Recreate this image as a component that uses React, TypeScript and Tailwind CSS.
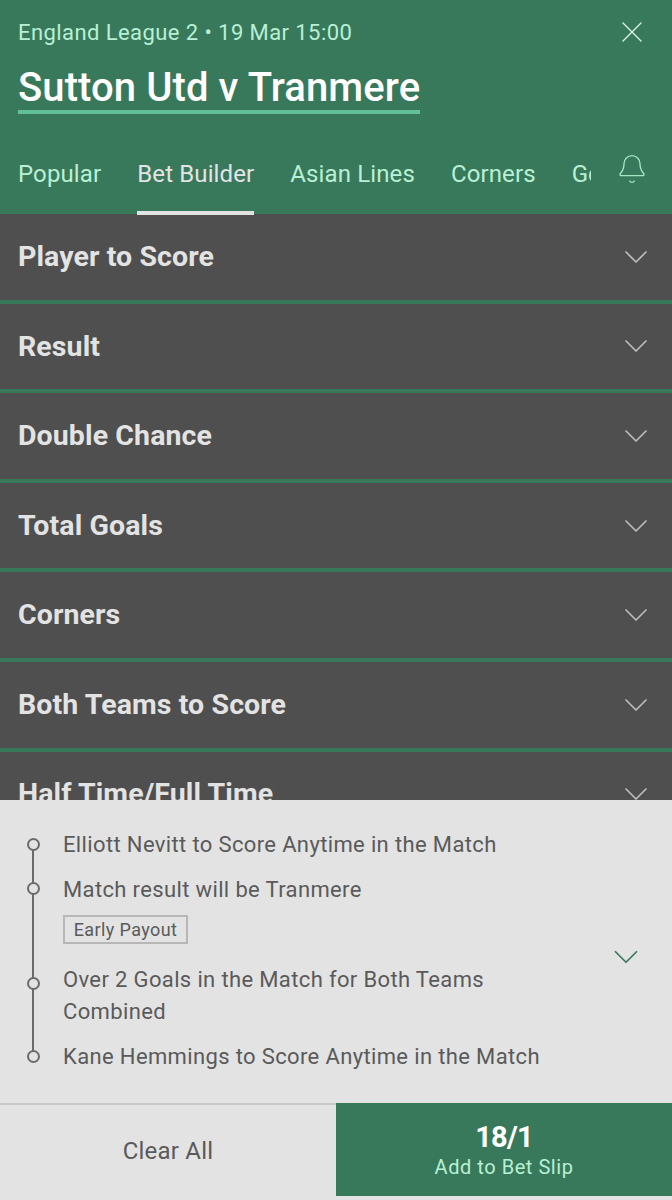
import { Bell, ChevronDown, X } from "lucide-react";

const markets = [
  "Player to Score",
  "Result",
  "Double Chance",
  "Total Goals",
  "Corners",
  "Both Teams to Score",
  "Half Time/Full Time",
];

const tabs = ["Popular", "Bet Builder", "Asian Lines", "Corners"];

function Dot({ top = "top-[9px]" }: { top?: string }) {
  return <span className={`absolute left-[-36px] h-[13px] w-[13px] rounded-full border-2 border-[#6b6b6b] bg-[#e3e3e3] ${top}`} />;
}

export default function App() {
  return (
    <main className="relative h-[1200px] w-[672px] overflow-hidden bg-[#4f4f4f] font-['Roboto',sans-serif]">
      <header className="relative h-[214px] bg-[#38795c] pl-[18px]">
        <div className="flex h-[66px] items-start justify-between pt-[19px] pr-[22px]">
          <p className="text-[22px] leading-[28px] tracking-[0.42px] text-[#b9f0d4]">England League 2 • 19 Mar 15:00</p>
          <X className="mt-[-5px] h-[36px] w-[36px] text-[#d8f2e4]" strokeWidth={0.9} />
        </div>
        <h1 className="w-fit border-b-[4px] border-[#62c096] text-[40px] font-medium leading-[44px] tracking-[0.1px] text-white">
          Sutton Utd v Tranmere
        </h1>
        <nav className="mt-[34px] flex h-[67px] items-start">
          <div className="flex w-[573px] gap-[36px] overflow-hidden pt-[11px]">
            {tabs.map((tab) => (
              <span
                key={tab}
                className={
                  tab === "Bet Builder"
                    ? "h-[56px] shrink-0 border-b-[4px] border-[#e3e3e3] text-[24px] leading-[30px] tracking-[0.12px] text-[#e3e3e3]"
                    : "h-[56px] shrink-0 text-[24px] leading-[30px] tracking-[0.12px] text-[#b9f0d4]"
                }
              >
                {tab}
              </span>
            ))}
            <span className="shrink-0 text-[24px] leading-[30px] text-[#b9f0d4]">Goals</span>
          </div>
          <Bell className="mt-[5px] ml-[25px] h-[32px] w-[32px] text-[#a5e6c5]" strokeWidth={1} />
        </nav>
      </header>

      <section>
        {markets.map((market) => (
          <div key={market} className="flex h-[89.6px] items-center justify-between border-b-[4px] border-[#38795c] pl-[18px] pr-[16px]">
            <span className="pt-[1px] text-[28.5px] font-bold tracking-[0.1px] text-[#e3e3e3]">{market}</span>
            <ChevronDown className="h-[40px] w-[40px] text-[#bdbdbd]" strokeWidth={1} />
          </div>
        ))}
      </section>

      <section className="absolute bottom-0 left-0 h-[400px] w-full bg-[#e3e3e3] text-[#5a5a5a]">
        <div className="relative h-[303px] pl-[63px] pt-[29px]">
          <div className="relative">
            <div className="absolute left-[-31px] top-[15px] h-[212px] w-[2px] bg-[#6b6b6b]" />
            <ul className="w-[470px] text-[22px] leading-[32px] tracking-[0.36px]">
              <li className="relative">
                <Dot />
                Elliott Nevitt to Score Anytime in the Match
              </li>
              <li className="relative mt-[13px]">
                <Dot top="top-[8px]" />
                Match result will be Tranmere
                <span className="mt-[9px] flex h-[29px] w-[125px] items-center justify-center border-2 border-[#b7b7b7] text-[18px] leading-none tracking-[0.4px]">
                  Early Payout
                </span>
              </li>
              <li className="relative mt-[20px]">
                <Dot top="top-[13px]" />
                Over 2 Goals in the Match for Both Teams Combined
              </li>
              <li className="relative mt-[13px] whitespace-nowrap">
                <Dot top="top-[9px]" />
                Kane Hemmings to Score Anytime in the Match
              </li>
            </ul>
          </div>
          <ChevronDown className="absolute left-[605px] top-[136px] h-[42px] w-[42px] text-[#38795c]" strokeWidth={1} />
        </div>
        <div className="flex h-[93px]">
          <button className="w-[336px] border-t-2 border-[#c9c9c9] text-[24px] tracking-[0.2px] text-[#5a5a5a]">Clear All</button>
          <button className="flex w-[336px] flex-col items-center bg-[#38795c] pt-[16px]">
            <span className="text-[29px] font-bold leading-[36px] tracking-[-0.8px] text-white">18/1</span>
            <span className="text-[20px] leading-[24px] tracking-[0.55px] text-[#b9f0d4]">Add to Bet Slip</span>
          </button>
        </div>
      </section>
    </main>
  );
}
